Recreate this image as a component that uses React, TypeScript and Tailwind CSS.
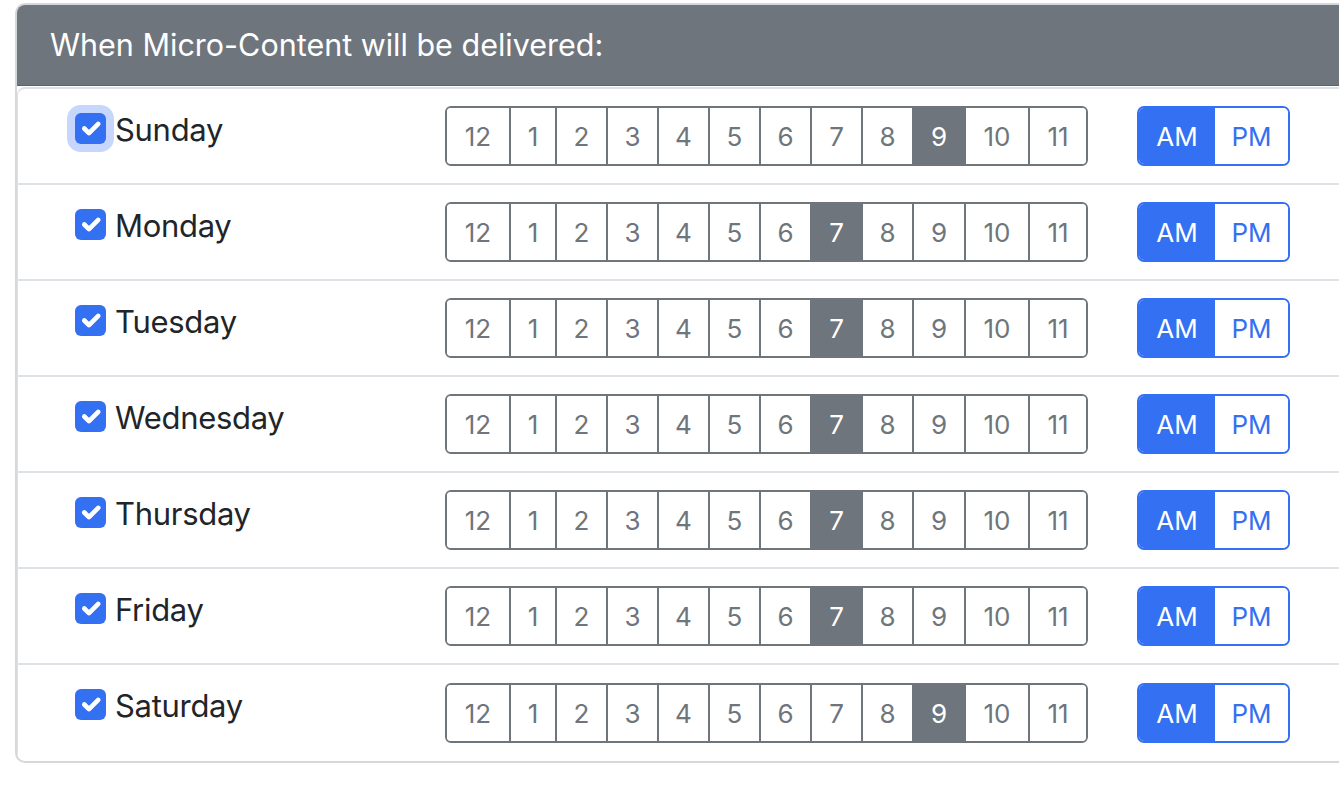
// Delivery schedule card: one row per weekday with an hour picker and AM/PM toggle.

const HOURS = ['12', '1', '2', '3', '4', '5', '6', '7', '8', '9', '10', '11']

// widths measured per button so the group lines up with the source layout
const HOUR_WIDTHS = [
  'w-[62px]',
  'w-[46px]',
  'w-[51px]',
  'w-[51px]',
  'w-[51px]',
  'w-[51px]',
  'w-[51px]',
  'w-[51px]',
  'w-[51px]',
  'w-[52px]',
  'w-[64px]',
  'w-[58px]',
]

type Day = { name: string; hour: string; focused?: boolean }

const DAYS: Day[] = [
  { name: 'Sunday', hour: '9', focused: true },
  { name: 'Monday', hour: '7' },
  { name: 'Tuesday', hour: '7' },
  { name: 'Wednesday', hour: '7' },
  { name: 'Thursday', hour: '7' },
  { name: 'Friday', hour: '7' },
  { name: 'Saturday', hour: '9' },
]

function cx(...parts: (string | false | undefined)[]) {
  return parts.filter(Boolean).join(' ')
}

export default function App() {
  return (
    <div
      className="h-[787px] w-[1339px] overflow-hidden bg-white pl-[15px] pt-[3px]"
      style={{ fontFamily: 'Inter, "Noto Sans", sans-serif' }}
    >
      <div className="w-[1420px] overflow-hidden rounded-[10px] border-2 border-[#d5d8db]">
        <div className="flex h-[81px] items-center border-b border-[#5c636a] bg-[#6e757d] pl-[33px] text-[30.5px] text-white">
          When Micro-Content will be delivered:
        </div>
        <div className="mt-[1px] rounded-tl-[8px] border-l border-t-2 border-[#dee2e6]">
          {DAYS.map((d, i) => (
            <DayRow key={d.name} day={d} last={i === DAYS.length - 1} />
          ))}
        </div>
      </div>
    </div>
  )
}

function DayRow({ day, last }: { day: Day; last: boolean }) {
  return (
    <div
      className={cx(
        'flex h-[96px] items-center',
        !last && 'border-b-2 border-[#dee2e6]',
      )}
    >
      <div className="flex w-[427px] items-start self-start pl-[57px] pt-[16px]">
        <span
          className={cx(
            'mt-[8px] flex h-[31px] w-[31px] shrink-0 items-center justify-center rounded-[6px] bg-[#3470f2]',
            day.focused && 'shadow-[0_0_0_8px_#c6d6fc]',
          )}
        >
          <svg viewBox="0 0 20 20" className="h-[31px] w-[31px]">
            <path
              d="M6 10l3 3l6-6"
              fill="none"
              stroke="white"
              strokeWidth="3"
              strokeLinecap="round"
              strokeLinejoin="round"
            />
          </svg>
        </span>
        <span className="ml-[9px] mt-[1px] text-[31px] leading-[48px] tracking-[-0.3px] text-[#212529]">
          {day.name}
        </span>
      </div>

      <div className="flex h-[60px] overflow-hidden rounded-[6px] border-2 border-[#6e757d]">
        {HOURS.map((h, i) => {
          const active = h === day.hour
          return (
            <button
              key={h}
              type="button"
              className={cx(
                'flex h-full items-center justify-center text-[26px]',
                HOUR_WIDTHS[i],
                i > 0 && 'border-l-2 border-[#6e757d]',
                active ? 'bg-[#6e757d] text-white' : 'bg-white text-[#6e757d]',
              )}
            >
              {h}
            </button>
          )
        })}
      </div>

      <div className="ml-[49px] flex h-[60px] overflow-hidden rounded-[7px] border-2 border-[#3470f2]">
        <button
          type="button"
          className="flex w-[76px] items-center justify-center bg-[#3470f2] text-[26px] text-white"
        >
          AM
        </button>
        <button
          type="button"
          className="flex w-[73px] items-center justify-center bg-white text-[26px] text-[#3470f2]"
        >
          PM
        </button>
      </div>
    </div>
  )
}
